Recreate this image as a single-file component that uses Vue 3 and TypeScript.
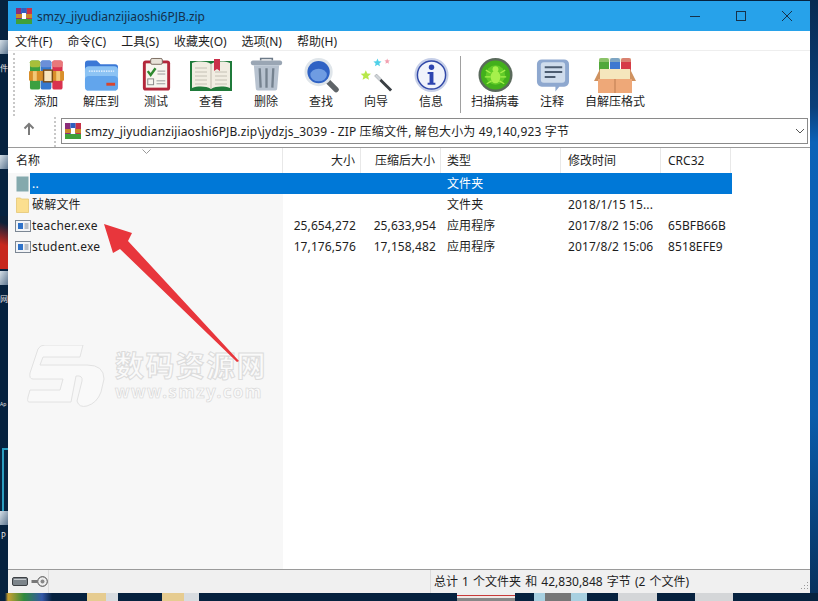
<script setup lang="ts">
const menus = ['文件(F)', '命令(C)', '工具(S)', '收藏夹(O)', '选项(N)', '帮助(H)']
const columns = [
  { label: '名称', cls: 'c-name' },
  { label: '大小', cls: 'c-size' },
  { label: '压缩后大小', cls: 'c-packed' },
  { label: '类型', cls: 'c-type' },
  { label: '修改时间', cls: 'c-date' },
  { label: 'CRC32', cls: 'c-crc' },
]
const rows = [
  { icon: 'up', name: '..', size: '', packed: '', type: '文件夹', date: '', crc: '', selected: true },
  { icon: 'folder', name: '破解文件', size: '', packed: '', type: '文件夹', date: '2018/1/15 15...', crc: '', selected: false },
  { icon: 'exe', name: 'teacher.exe', size: '25,654,272', packed: '25,633,954', type: '应用程序', date: '2017/8/2 15:06', crc: '65BFB66B', selected: false },
  { icon: 'exe', name: 'student.exe', size: '17,176,576', packed: '17,158,482', type: '应用程序', date: '2017/8/2 15:06', crc: '8518EFE9', selected: false },
]
</script>

<template>
  <div class="desktop">
    <div class="deco tile t1"></div>
    <div class="deco tile t2"></div>
    <div class="deco tile t3"></div>
    <div class="deco tile t4"></div>
    <div class="deco d-red"></div>
    <div class="deco d-cyan"></div>
    <div class="deco dt t-a">件</div>
    <div class="deco dt t-b">网</div>
    <div class="deco dt t-c">Ap</div>
    <div class="deco dt t-d">P</div>
    <div class="deco d-right"></div>
    <div class="deco d-d"></div>
    <div class="deco d-e"></div>
    <div class="deco d-f"></div>
    <div class="deco d-g"></div>
    <div class="deco d-h"></div>
    <div class="deco d-i"></div>
    <div class="deco d-j"></div>

    <div class="window">
      <header class="titlebar">
        <svg class="app-icon" viewBox="0 0 16 16">
          <rect x="0" y="0" width="5.4" height="16" fill="#8b2d7a" />
          <rect x="5.4" y="0" width="5.3" height="16" fill="#2f5fc0" />
          <rect x="10.7" y="0" width="5.3" height="16" fill="#c8324a" />
          <rect x="0" y="11" width="16" height="5" fill="#3fa03a" />
          <rect x="0" y="6" width="16" height="4" fill="#c98a2a" />
          <rect x="6" y="5" width="4" height="6" fill="#fff" />
        </svg>
        <span class="title-text">smzy_jiyudianzijiaoshi6PJB.zip</span>
        <div class="win-controls">
          <svg class="win-btn" viewBox="0 0 46 30"><path d="M18 15.5h10" stroke="#16324a" stroke-width="1" fill="none" /></svg>
          <svg class="win-btn" viewBox="0 0 46 30"><rect x="18.5" y="10.5" width="9" height="9" stroke="#16324a" fill="none" /></svg>
          <svg class="win-btn" viewBox="0 0 46 30"><path d="M18 10l10 10M28 10l-10 10" stroke="#16324a" fill="none" /></svg>
        </div>
      </header>

      <nav class="menubar">
        <span v-for="m in menus" :key="m" class="menu-item">{{ m }}</span>
      </nav>

      <section class="toolbar">
        <div class="gripper"></div>
        <div class="tool">
          <svg class="ti" viewBox="0 0 36 36">
            <rect x="1" y="3" width="10.5" height="30" rx="2" fill="#3ca040" />
            <rect x="12" y="3" width="11" height="30" rx="2" fill="#3578cf" />
            <rect x="24" y="3" width="10.5" height="30" rx="2" fill="#d9324f" />
            <rect x="1" y="3" width="10.5" height="7" rx="2" fill="#a7bf3a" />
            <rect x="12" y="3" width="11" height="7" rx="2" fill="#6b8fd8" />
            <rect x="24" y="3" width="10.5" height="7" rx="2" fill="#e8787a" />
            <rect x="0" y="14" width="36" height="10" rx="1" fill="#d98f2a" />
            <rect x="4" y="14" width="4" height="10" fill="#f3c878" />
            <rect x="15" y="13" width="9" height="12" fill="#f6e4c0" stroke="#7a4a16" stroke-width="1.5" />
            <rect x="28" y="14" width="4" height="10" fill="#f3c878" />
          </svg>
          <span>添加</span>
        </div>
        <div class="tool">
          <svg class="ti" viewBox="0 0 36 36">
            <path d="M1 6a3 3 0 0 1 3-3h9l4 4h15a3 3 0 0 1 3 3v6H1z" fill="#3b78d6" />
            <rect x="1" y="9" width="34" height="25" rx="4" fill="#8cc3f4" />
            <rect x="1" y="19" width="34" height="15" rx="4" fill="#62a5ec" />
            <path d="M5 14h26" stroke="#f2f8ff" stroke-width="1.5" stroke-dasharray="1.5 1" />
            <rect x="23" y="26" width="9" height="3" fill="#d8452e" />
          </svg>
          <span>解压到</span>
        </div>
        <div class="tool">
          <svg class="ti" viewBox="0 0 36 36">
            <rect x="4" y="3" width="28" height="31" rx="3" fill="#b3273a" />
            <rect x="7" y="6" width="22" height="25" fill="#f7f5ee" />
            <rect x="12" y="1" width="12" height="6" rx="1.5" fill="#e8e2d8" stroke="#7a6a60" />
            <path d="M9 14l3 4 5-7" stroke="#2f8a2f" stroke-width="2.5" fill="none" />
            <path d="M19 14h8M19 17h8M18 24h9M18 27h9" stroke="#999" />
            <rect x="9" y="22" width="6" height="6" fill="none" stroke="#888" />
          </svg>
          <span>测试</span>
        </div>
        <div class="tool">
          <svg class="ti book" viewBox="0 0 42 34">
            <rect x="0" y="3" width="42" height="30" fill="#1f7a3a" />
            <path d="M2 5c6-2 14-2 19 1 5-3 13-3 19-1v25c-6-2-14-2-19 1-5-3-13-3-19-1z" fill="#f1ede2" />
            <path d="M21 6v25" stroke="#bdb8aa" />
            <path d="M5 10h12M5 14h12M5 18h12M5 22h12M5 26h12M25 14h12M25 18h12M25 22h12M25 26h12" stroke="#c4c0b4" />
            <path d="M24 1h6v12l-3-2-3 2z" fill="#c9304a" />
          </svg>
          <span>查看</span>
        </div>
        <div class="tool">
          <svg class="ti" viewBox="0 0 36 36">
            <path d="M12 3V1h12v2" stroke="#6d7a88" stroke-width="1.6" fill="none" />
            <rect x="2" y="3" width="32" height="5" rx="2" fill="#9aa6b4" />
            <path d="M5 8h26l-2 24a2 2 0 0 1-2 2H9a2 2 0 0 1-2-2z" fill="#b7c2cf" />
            <path d="M11 11l1 20M18 11v20M25 11l-1 20" stroke="#75828f" stroke-width="2.4" />
          </svg>
          <span>删除</span>
        </div>
        <div class="tool">
          <svg class="ti" viewBox="0 0 36 36">
            <path d="M24 24l9 9" stroke="#5f6468" stroke-width="5.5" stroke-linecap="round" />
            <circle cx="15" cy="15" r="14.5" fill="#dfe5ea" />
            <circle cx="15" cy="15" r="11.5" fill="#2f62c4" />
            <ellipse cx="15" cy="18" rx="8.5" ry="6.5" fill="#6f9ce2" />
          </svg>
          <span>查找</span>
        </div>
        <div class="tool">
          <svg class="ti" viewBox="0 0 36 36">
            <path d="M17 18l16 16" stroke="#3a3f44" stroke-width="3" />
            <path d="M17 18l5 5" stroke="#cfd4d8" stroke-width="3" />
            <path d="M7 13l1.5 3.5 3.8.3-2.9 2.5.9 3.7L7 21l-3.3 2 .9-3.7-2.9-2.5 3.8-.3z" fill="#b7e84a" />
            <path d="M19 1l1.2 2.8 3 .3-2.3 2 .7 3L19 7.500l-2.600 1.600.7-3-2.300-2 3-.3z" fill="#4fd0e8" />
            <path d="M29 1l.8 1.900 2 .2-1.500 1.300.5 2L29 5.400l-1.800 1 .5-2-1.500-1.300 2-.2z" fill="#f2a0b0" />
          </svg>
          <span>向导</span>
        </div>
        <div class="tool">
          <svg class="ti" viewBox="0 0 36 36">
            <circle cx="18" cy="18" r="17.500" fill="#c6cfe8" />
            <circle cx="18" cy="18" r="14.500" fill="#f0f3fb" stroke="#3048a8" stroke-width="1.500" />
            <circle cx="18" cy="10" r="2.800" fill="#2c44b0" />
            <path d="M14 15h6v11h2v2h-8v-2h2v-9h-2z" fill="#2c44b0" />
          </svg>
          <span>信息</span>
        </div>
        <div class="tool-sep"></div>
        <div class="tool w-scan">
          <svg class="ti" viewBox="0 0 36 36">
            <circle cx="18" cy="18" r="17.500" fill="#5a6a5c" />
            <circle cx="18" cy="18" r="15" fill="#43b01c" />
            <circle cx="18" cy="18" r="10" fill="#62cc28" />
            <ellipse cx="18" cy="20" rx="5" ry="6.500" fill="#a6f04c" />
            <circle cx="18" cy="12" r="3" fill="#a6f04c" />
            <path d="M8 13l5 3M28 13l-5 3M7 20h6M29 20h-6M9 27l5-3M27 27l-5-3" stroke="#a6f04c" stroke-width="1.300" />
          </svg>
          <span>扫描病毒</span>
        </div>
        <div class="tool w-note">
          <svg class="ti" viewBox="0 0 36 36">
            <path d="M7 2h23a5 5 0 0 1 5 5v18a5 5 0 0 1-5 5h-5l-4 5v-5H7a5 5 0 0 1-5-5V7a5 5 0 0 1 5-5z" fill="#8ea8cf" />
            <rect x="6" y="5" width="25" height="21" rx="3" fill="#cfdcec" />
            <path d="M10 10h18M10 15h18M10 20h11" stroke="#4c5c70" stroke-width="2" />
          </svg>
          <span>注释</span>
        </div>
        <div class="tool w-sfx">
          <svg class="ti sfx" viewBox="0 0 42 36">
            <rect x="5" y="1" width="10" height="14" rx="2" fill="#52a83a" />
            <rect x="16" y="1" width="10" height="14" rx="2" fill="#3d78d0" />
            <rect x="27" y="1" width="10" height="14" rx="2" fill="#d63c46" />
            <rect x="5" y="1" width="32" height="4" fill="#dfe8b0" opacity=".4" />
            <path d="M6 12h30l2 10H4z" fill="#f5e6bc" />
            <path d="M0 24l6-12v12zM42 24l-6-12v12z" fill="#cf9260" />
            <path d="M4 22h34v14H4z" fill="#eea878" />
            <path d="M21 22v14" stroke="#bd7d50" />
          </svg>
          <span>自解压格式</span>
        </div>
      </section>

      <section class="pathbar">
        <div class="up-wrap">
          <svg class="up-arrow" viewBox="0 0 12 14"><path d="M6 13V2M1.500 6.500L6 2l4.500 4.500" stroke="#7b7b7b" stroke-width="2" fill="none" /></svg>
        </div>
        <div class="path-box">
          <svg class="app-icon small" viewBox="0 0 16 16">
            <rect x="0" y="0" width="5.4" height="16" fill="#8b2d7a" />
            <rect x="5.4" y="0" width="5.3" height="16" fill="#2f5fc0" />
            <rect x="10.7" y="0" width="5.3" height="16" fill="#c8324a" />
            <rect x="0" y="11" width="16" height="5" fill="#3fa03a" />
            <rect x="0" y="6" width="16" height="4" fill="#c98a2a" />
            <rect x="6" y="5" width="4" height="6" fill="#fff" />
          </svg>
          <span class="path-text">smzy_jiyudianzijiaoshi6PJB.zip\jydzjs_3039 - ZIP 压缩文件, 解包大小为 49,140,923 字节</span>
          <svg class="chevron" viewBox="0 0 10 6"><path d="M1 1l4 4 4-4" stroke="#555" fill="none" /></svg>
        </div>
      </section>

      <main class="list">
        <div class="name-shade"></div>
        <div class="row head">
          <div v-for="c in columns" :key="c.label" class="cell" :class="c.cls">{{ c.label }}</div>
          <svg class="sort-mark" viewBox="0 0 9 5"><path d="M.5.500l4 4 4-4" stroke="#9a9a9a" fill="none" /></svg>
        </div>
        <div v-for="r in rows" :key="r.name" class="row body" :class="{ selected: r.selected }">
          <div class="cell c-name name-cell">
            <span class="file-icon">
              <svg v-if="r.icon === 'up'" viewBox="0 0 14 16"><rect x="0.500" y="0.500" width="12" height="15" fill="#84a9ad" /></svg>
              <svg v-else-if="r.icon === 'folder'" viewBox="0 0 14 16"><path d="M.5 1h4l1 1h7v13.500H.5z" fill="#fbdf8f" stroke="#e3c268" stroke-width=".7" /></svg>
              <svg v-else viewBox="0 0 16 16"><rect x=".5" y="2.500" width="15" height="11" fill="#f2f4f7" stroke="#7c8794" /><rect x="3" y="5" width="5" height="6" fill="#2e72c9" /><path d="M9.500 6h4M9.500 8h4M9.500 10h4" stroke="#7c8794" /></svg>
            </span>
            <span class="name-label">{{ r.name }}</span>
          </div>
          <div class="cell c-size">{{ r.size }}</div>
          <div class="cell c-packed">{{ r.packed }}</div>
          <div class="cell c-type">{{ r.type }}</div>
          <div class="cell c-date">{{ r.date }}</div>
          <div class="cell c-crc">{{ r.crc }}</div>
        </div>

        <div class="watermark">
          <svg class="wm-logo" viewBox="0 0 80 64">
            <path d="M11 4Q13 0 18 0H56L53 12H16L13 20H60Q77 20 77 34L74 47Q70 58 60 61Q52 63 50 56L55 36Q56 30 49 31L44 57H2Q0 57 1 52L3 45H33L36 34H6Q2 34 3 28z" fill="#f9f9f9" stroke="#e2e2e2" stroke-width="1" />
          </svg>
          <div class="wm-text">
            <div class="wm-cn">数码资源网</div>
            <div class="wm-url">www.smzy.com</div>
          </div>
        </div>

        <svg class="red-arrow" viewBox="0 0 140 140">
          <path d="M0 0L28 9 24 17 135 137 133 138 16 25 9 29z" fill="#e8363c" />
        </svg>
      </main>

      <footer class="status">
        <div class="status-left">
          <svg class="st-disk" viewBox="0 0 16 9"><rect x=".5" y=".5" width="15" height="8" rx="1.500" fill="#7c848a" stroke="#3c4044" /><path d="M2 2.500h12" stroke="#c4c8cc" /></svg>
          <svg class="st-key" viewBox="0 0 17 11"><circle cx="11.500" cy="5.500" r="4.800" fill="#eee" stroke="#444" /><circle cx="11.500" cy="5.500" r="2" fill="#888" /><path d="M.5 4h6v3H.5z" fill="#777" /></svg>
        </div>
        <div class="status-main">总计 1 个文件夹 和 42,830,848 字节 (2 个文件)</div>
        <svg class="grip" viewBox="0 0 10 10"><path d="M8 1h1v1H8zM5 4h1v1H5zM8 4h1v1H8zM2 7h1v1H2zM5 7h1v1H5zM8 7h1v1H8z" fill="#9a9a9a" /></svg>
      </footer>
    </div>
  </div>
</template>

<style>
html, body { margin: 0; background: #071f3c; overflow: hidden; }
</style>

<style scoped>
.desktop {
  position: relative;
  width: 818px;
  height: 601px;
  box-sizing: border-box;
  padding: 1px 8px 8px 8px;
  background: #06223f;
  overflow: hidden;
  font-family: "Noto Sans", "Noto Sans CJK SC", sans-serif;
  font-size: 12px;
  color: #1e1e1e;
}
.deco { position: absolute; }
.tile { left: 0; width: 8px; height: 14px; background: linear-gradient(120deg, #d4dee6, #5d7690); }
.t1 { top: 40px; }
.t2 { top: 155px; }
.t3 { top: 271px; }
.t4 { top: 511px; }
.d-red { left: 0; top: 216px; width: 8px; height: 53px; background: linear-gradient(200deg, #0c2038 15%, #c8281e 55%); }
.d-cyan { left: 2px; top: 448px; width: 6px; height: 63px; box-sizing: border-box; border: 2px solid #2a9cc0; border-right: none; border-bottom: none; }
.dt { left: 0; width: 8px; color: #e6e6e6; font-size: 8px; line-height: 11px; white-space: nowrap; }
.t-a { top: 62px; }
.t-b { top: 293px; }
.t-c { top: 399px; font-size: 5px; }
.t-d { top: 530px; left: 1px; width: 7px; }
.d-right { right: 0; top: 0; width: 8px; height: 593px; background: linear-gradient(180deg, #082a52 0, #0a3f7a 18%, #0a62b8 24%, #0a5cab 70%, #07315e 100%); }
.d-d { left: 0; top: 593px; width: 52px; height: 8px; background: linear-gradient(90deg, #06223f 0 5px, #c9a030 8px, #2f8a3c 24px, #3458a8 42px, #06223f 52px); }
.d-e { left: 87px; top: 593px; width: 31px; height: 8px; background: linear-gradient(90deg, #e6cc90 0 60%, #d8dce0 60%); }
.d-f { left: 162px; top: 593px; width: 37px; height: 8px; background: linear-gradient(90deg, #e6cc90 0 60%, #d8dce0 60%); }
.d-g { left: 457px; top: 593px; width: 58px; height: 8px; background: linear-gradient(180deg, #eee 0 2px, #c83a3a 2px 3px, #f0e8e6 3px 5px, #888 5px); }
.d-h { left: 534px; top: 593px; width: 53px; height: 8px; background: linear-gradient(90deg, #a8d0e0 0 20%, #777 20% 70%, #a8d0e0 70%); }
.d-i { left: 618px; top: 593px; width: 39px; height: 8px; background: #d4d6d8; }
.d-j { left: 695px; top: 593px; width: 38px; height: 8px; background: #d4d6d8; }

.window {
  position: relative;
  width: 802px;
  height: 592px;
  display: flex;
  flex-direction: column;
  background: #fff;
}
.titlebar {
  height: 30px;
  flex: none;
  display: flex;
  align-items: center;
  padding-left: 8px;
  background: #27a2ea;
}
.app-icon { width: 16px; height: 16px; flex: none; }
.title-text { margin-left: 5px; font-size: 12px; color: #14304a; }
.win-controls { margin-left: auto; display: flex; }
.win-btn { width: 46px; height: 30px; display: block; }

.menubar {
  height: 19px;
  flex: none;
  box-sizing: border-box;
  display: flex;
  align-items: center;
  padding: 2px 0 0 7px;
  gap: 15px;
  background: #fff;
}
.menu-item { line-height: 17px; }

.toolbar {
  height: 67px;
  flex: none;
  box-sizing: border-box;
  display: flex;
  padding-left: 10.5px;
  border-top: 1px solid #eeeeee;
  position: relative;
}
.gripper {
  position: absolute;
  left: 5px;
  top: 2px;
  height: 63px;
  border-left: 2px dotted #c8c8c8;
}
.tool {
  width: 55px;
  flex: none;
  display: flex;
  flex-direction: column;
  align-items: center;
  padding-top: 6px;
  box-sizing: border-box;
}
.tool span { line-height: 17px; white-space: nowrap; }
.ti { width: 35px; height: 36px; display: block; }
.book { width: 42px; }
.sfx { width: 42px; }
.tool-sep { width: 1px; flex: none; margin: 5px 4px 4px 1.500px; background: #a0a0a0; }
.w-scan { width: 60px; }
.w-note { width: 54px; }
.w-sfx { width: 72px; }

.pathbar {
  height: 30px;
  flex: none;
  box-sizing: border-box;
  display: flex;
  align-items: flex-start;
  background: #fff;
}
.up-wrap {
  width: 48px;
  height: 30px;
  flex: none;
  box-sizing: border-box;
  display: flex;
  justify-content: center;
  padding: 5px 4px 0 0;
  border-right: 2px dotted #c8c8c8;
}
.up-arrow { width: 12px; height: 14px; }
.path-box {
  flex: 1;
  height: 26px;
  margin: 1px 2px 0 5px;
  box-sizing: border-box;
  border: 1px solid #8a8a8a;
  display: flex;
  align-items: center;
  padding-left: 3px;
}
.small { width: 16px; height: 16px; }
.path-text { margin-left: 4px; white-space: nowrap; letter-spacing: .14px; }
.chevron { width: 10px; height: 6px; margin-left: auto; margin-right: 2px; }

.list {
  flex: 1;
  position: relative;
  min-height: 0;
  border-top: 1px solid #9a9a9a;
  border-bottom: 1px solid #9a9a9a;
  overflow: hidden;
}
.name-shade {
  position: absolute;
  left: 0;
  top: 0;
  bottom: 0;
  width: 275px;
  background: #f7f7f7;
}
.row { display: flex; position: relative; }
.head { height: 25px; align-items: center; }
.body { height: 21px; align-items: center; letter-spacing: .1px; }
.cell { box-sizing: border-box; white-space: nowrap; height: 100%; line-height: 21px; }
.head .cell { line-height: 25px; border-right: 1px solid #e8e8e8; background: #fff; }
.c-name { width: 275px; padding-left: 8px; }
.c-size { width: 78px; text-align: right; padding-right: 5px; }
.c-packed { width: 80px; text-align: right; padding-right: 5px; }
.c-type { width: 120px; padding-left: 6px; }
.c-date { width: 100px; padding-left: 7px; }
.c-crc { width: 70px; padding-left: 7px; }
.sort-mark { position: absolute; left: 134px; top: 1px; width: 9px; height: 5px; }
.name-cell { display: flex; align-items: center; }
.file-icon { width: 16px; height: 16px; flex: none; margin-left: -1px; }
.file-icon svg { width: 16px; height: 16px; display: block; }
.name-label { padding-left: 1px; letter-spacing: .2px; position: relative; }
.selected { color: #fff; }
.selected::before {
  content: "";
  position: absolute;
  left: 22px;
  top: 0;
  width: 702px;
  height: 21px;
  background: #0078d7;
}
.selected .cell { position: relative; }

.watermark {
  position: absolute;
  left: 19px;
  top: 197px;
  display: flex;
  align-items: flex-start;
  gap: 8px;
  pointer-events: none;
}
.wm-logo { width: 80px; height: 64px; flex: none; }
.wm-text { padding-top: 6px; }
.wm-cn {
  font-size: 29px;
  line-height: 30px;
  font-weight: 700;
  letter-spacing: 1.400px;
  white-space: nowrap;
  color: #fafafa;
  -webkit-text-stroke: 1px #dcdcdc;
}
.wm-url {
  margin-top: 2px;
  font-size: 17px;
  line-height: 18px;
  font-weight: 700;
  letter-spacing: 1.400px;
  white-space: nowrap;
  color: #fafafa;
  -webkit-text-stroke: .6px #d6d6d6;
}
.red-arrow {
  position: absolute;
  left: 96px;
  top: 76px;
  width: 140px;
  height: 140px;
  pointer-events: none;
}

.status {
  height: 23px;
  flex: none;
  display: flex;
  align-items: center;
  position: relative;
  background: #f0f0f0;
}
.status-left {
  width: 41px;
  height: 100%;
  flex: none;
  display: flex;
  align-items: center;
  gap: 3px;
  padding-left: 4px;
  box-sizing: border-box;
  border-right: 1px solid #dcdcdc;
}
.st-disk { width: 16px; height: 9px; }
.st-key { width: 17px; height: 11px; }
.status-main {
  margin-left: 381px;
  padding-left: 3px;
  border-left: 1px solid #dcdcdc;
  height: 100%;
  line-height: 23px;
  word-spacing: 1px;
}
.grip { position: absolute; right: 1px; bottom: 2px; width: 10px; height: 10px; }
</style>
